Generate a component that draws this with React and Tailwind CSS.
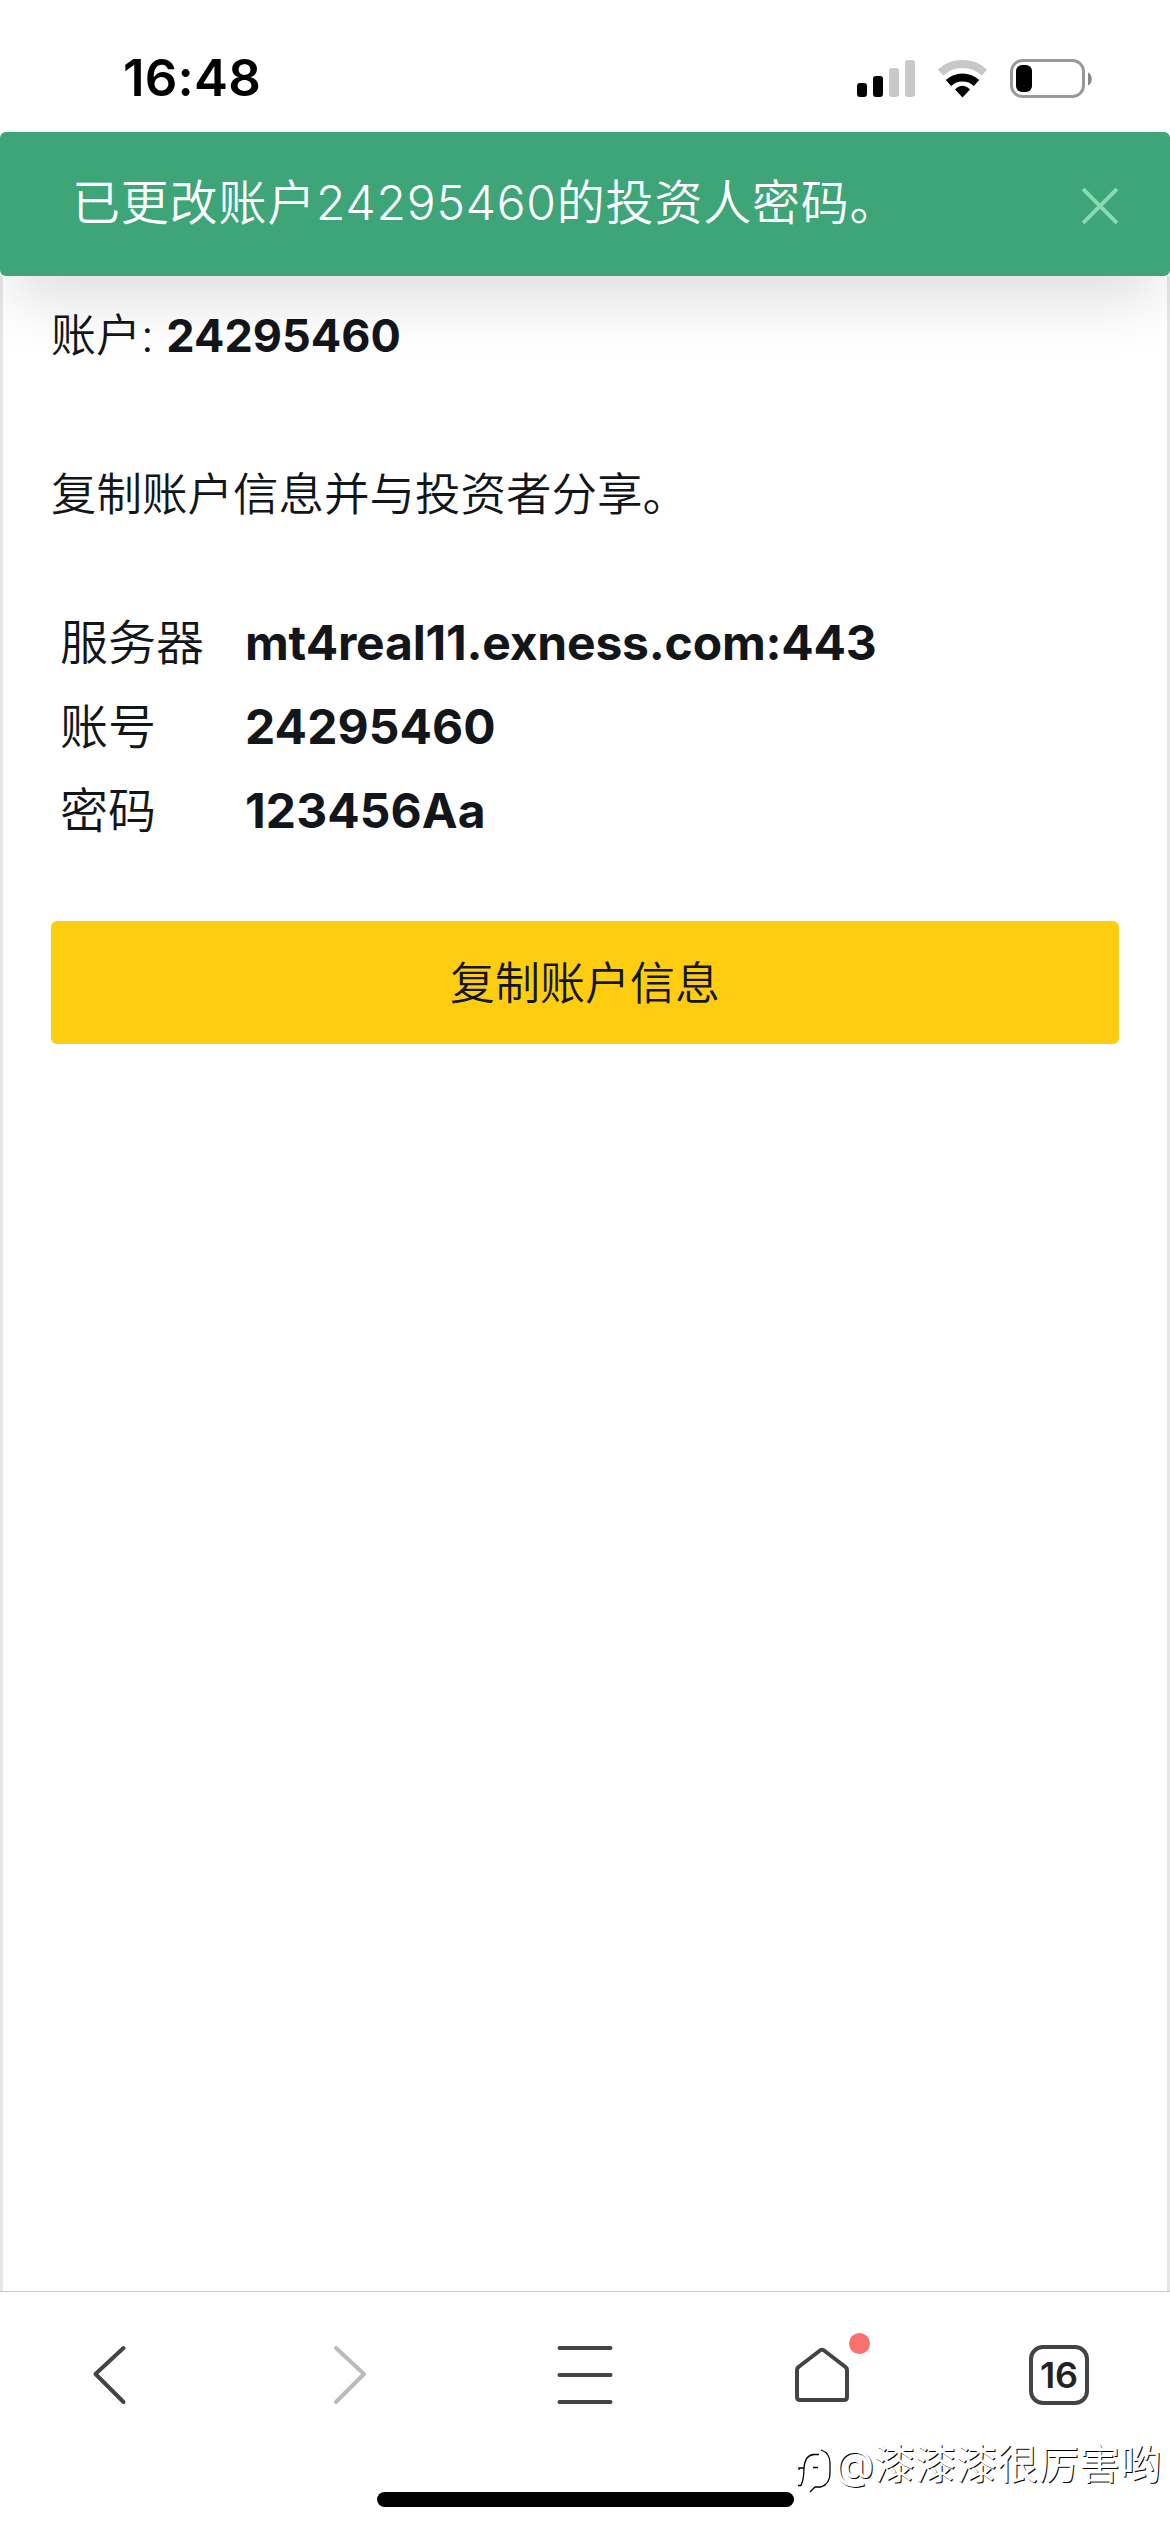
import React from "react";

const rows = [
  { label: "服务器", value: "mt4real11.exness.com:443", tracking: "tracking-[-0.2px]" },
  { label: "账号", value: "24295460", tracking: "tracking-[0.1px]" },
  { label: "密码", value: "123456Aa", tracking: "tracking-[0.1px]" },
];

const StatusBar = () => (
  <div className="relative z-20 h-[132px] bg-white flex items-center justify-between pl-[123px] pr-[77px] pt-6">
    <span className="text-[51px] leading-none font-semibold text-black tracking-[0.2px] -mt-0.5">16:48</span>
    <svg width="238" height="42" viewBox="854 56 238 42" fill="none">
      {/* Signal */}
      <rect x="856" y="82" width="10" height="14" rx="3" fill="#000" />
      <rect x="872" y="75" width="10" height="21" rx="3" fill="#000" />
      <rect x="888" y="67" width="10" height="29" rx="3" fill="#c8c8c8" />
      <rect x="904" y="59" width="10" height="37" rx="3" fill="#c8c8c8" />
      {/* Wifi */}
      <path d="M939.5 71.5a33 33 0 0 1 44 0" stroke="#c8c8c8" strokeWidth="8" />
      <path d="M947.5 82a20.5 20.5 0 0 1 28 0" stroke="#000" strokeWidth="8" />
      <path d="M954 88.500q7.500 -7.500 15 0l-7.500 8z" fill="#000" />
      {/* Battery */}
      <rect x="1010.500" y="59.500" width="72" height="36" rx="11" stroke="#999" strokeWidth="3" />
      <rect x="1015" y="64" width="16" height="27" rx="6" fill="#000" />
      <path d="M1087 71.500c5 2 5 11 0 13z" fill="#888" />
    </svg>
  </div>
);

const Toast = () => (
  <div className="relative z-10 h-[144px] rounded-[6px] bg-[#3da578] shadow-[0_36px_60px_-12px_rgba(0,0,0,0.13)] flex items-center justify-between pl-[72px] pr-[52px]">
    <p className="text-[48px] leading-[72px] font-[350] tracking-[0.8px] text-white -mt-0.5">已更改账户24295460的投资人密码。</p>
    <svg width="36" height="36" viewBox="0 0 36 36" className="mt-1" fill="none" stroke="#86dbb0" strokeWidth="4">
      <path d="M1 1l34 34M35 1L1 35" />
    </svg>
  </div>
);

const BottomNav = () => (
  <nav className="relative h-[241px] border-t border-[#c8c8c8] flex flex-col items-center">
    <div className="w-full flex items-center pt-[51px] pl-[92px]">
      <svg width="35" height="64" viewBox="92 2344 35 64" fill="none" stroke="#444" strokeWidth="4" strokeLinecap="round" strokeLinejoin="round">
        <path d="M123.500 2349L95.500 2375l28 28" />
      </svg>
      <svg width="35" height="64" viewBox="332 2344 35 64" className="ml-[205px]" fill="none" stroke="#bbb" strokeWidth="4" strokeLinecap="round" strokeLinejoin="round">
        <path d="M336 2349l28 26-28 28" />
      </svg>
      <svg width="60" height="64" viewBox="555 2344 60 64" className="ml-[188px]" fill="none" stroke="#444" strokeWidth="4" strokeLinecap="round">
        <path d="M559.500 2349h51M559.500 2376h51M559.500 2403h51" />
      </svg>
      <div className="relative ml-[178px]">
        <svg width="58" height="64" viewBox="793 2344 58 64" fill="none" stroke="#444" strokeWidth="4" strokeLinejoin="round">
          <path d="M797 2371q0-2 1.500-3l21.500-16.500q2-1.500 4 0l21.500 16.500q1.500 1 1.500 3v27q0 3-3 3h-44q-3 0-3-3z" />
        </svg>
        <span className="absolute -top-[10px] left-[56px] w-[21px] h-[21px] rounded-full bg-[#f9716d]" />
      </div>
      <div className="ml-[178px] w-[60px] h-[60px] rounded-[14px] border-4 border-[#444] flex items-center justify-center text-[36px] leading-none font-semibold text-[#222]">
        16
      </div>
    </div>
    <div className="mt-[85px] w-[417px] h-[15px] rounded-full bg-black" />

    {/* Watermark */}
    <div className="absolute top-[142px] right-[9px] flex items-center text-white">
      <svg width="36" height="48" viewBox="794 2446 36 48" className="mt-3 mr-[2px]" fill="none" stroke="#000" strokeWidth="1.300">
        <path d="M797 2470v-2h5q1-13 10-13.500h5M802 2468q0 11-3 17.500h-3M811 2467.500h5M819 2450q9 3 9 13v10q0 11-9 14h-6l-5 5" />
      </svg>
      <span className="text-[41px] leading-[60px] [text-shadow:1px_1px_0_#000]">@漆漆漆很厉害哟</span>
    </div>
  </nav>
);

export default function App() {
  return (
    <div className="w-[1170px] h-[2532px] overflow-hidden bg-white text-[#12161a] font-[Inter,'Noto_Sans_CJK_SC',sans-serif]">
      <StatusBar />
      <Toast />
      <main className="h-[2015px] border-x-[3px] border-[#e6e6e6] px-12">
        <p className="pt-[26px] text-[45px] leading-[68px] font-[350]">
          账户: <b className="font-bold">24295460</b>
        </p>
        <p className="mt-[91px] text-[45.500px] leading-[68px] font-[350]">复制账户信息并与投资者分享。</p>
        <div className="mt-[72px] pl-[9px] text-[48px] leading-[84px]">
          {rows.map((row) => (
            <div key={row.label} className="flex">
              <span className="w-[185px] font-[350]">{row.label}</span>
              <span className={`font-bold ${row.tracking}`}>{row.value}</span>
            </div>
          ))}
        </div>
        <button className="mt-[68px] w-full h-[123px] rounded-[6px] bg-[#ffcd10] pt-0.5 text-[45px] font-[350]">复制账户信息</button>
      </main>
      <BottomNav />
    </div>
  );
}
